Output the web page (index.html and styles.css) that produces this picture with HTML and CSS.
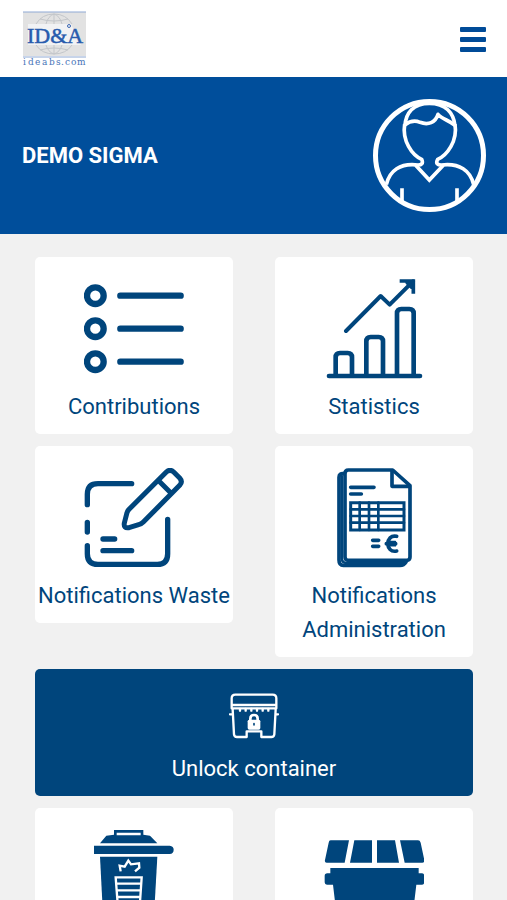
FILE: index.html
```html
<!DOCTYPE html>
<html lang="en">
<head>
<meta charset="utf-8">
<meta name="viewport" content="width=device-width, initial-scale=1">
<title>DEMO SIGMA</title>
<link rel="stylesheet" href="styles.css">
</head>
<body>
<header class="topbar">
  <a class="brand" href="#">
    <svg class="brand-logo" viewBox="0 0 63 56">
      <rect y="1" width="63" height="44" fill="#e2e2e2"/>
      <path d="M5 13H48L58 34H5Z" fill="#f1f2f4"/>
      <g fill="none" stroke="#c3c6ca" stroke-width="1">
        <path d="M13 13Q19 3 31 3Q43 3 49 13M23 13Q25 5 31 3Q37 5 39 13M17 8Q31 12 45 8M31 3V13"/>
        <path d="M13 34Q19 43 31 43Q43 43 49 34M23 34Q25 41 31 43Q37 41 39 34M17 39Q31 35 45 39M31 34V43"/>
      </g>
      <path d="M0 1H63M0 46H63" stroke="#8fa9d4" stroke-width="1"/>
      <text class="logo-name" x="4" y="32">ID&amp;A</text>
      <circle cx="46" cy="15" r="1.500" fill="none" stroke="#3c68b3"/>
      <text class="logo-site" x="0" y="54">i</text>
      <text class="logo-site" x="5" y="54">d</text>
      <text class="logo-site" x="12" y="54">e</text>
      <text class="logo-site" x="19" y="54">a</text>
      <text class="logo-site" x="26" y="54">b</text>
      <text class="logo-site" x="33" y="54">s</text>
      <text class="logo-site" x="38" y="54">.</text>
      <text class="logo-site" x="42" y="54">c</text>
      <text class="logo-site" x="48" y="54">o</text>
      <text class="logo-site" x="54" y="54">m</text>
    </svg>
  </a>
  <button class="menu-button" type="button" aria-label="Menu">
    <span class="menu-bar"></span><span class="menu-bar"></span><span class="menu-bar"></span>
  </button>
</header>

<section class="profile">
  <h1 class="profile-name">DEMO SIGMA</h1>
  <svg class="avatar" viewBox="39 296 339 339" fill="none" stroke="#fff" stroke-width="11" stroke-linejoin="round">
    <circle cx="208.500" cy="465.500" r="162" stroke-width="15"/>
    <path d="M135 376C137 338 160 309 208 309C257 309 281 338 285 376"/>
    <path d="M134 374C151 361 166 360 180 366C205 375 226 367 234 342C247 357 266 359 285 375"/>
    <path d="M134 372C126 421 156 464 185 477C191 490 184 494 174 494C121 487 88 511 79 553M285 372C293 421 262 464 233 477C226 490 233 494 244 494C298 487 332 511 341 553"/>
    <path d="M167 495L208 539L250 495M126 564V608M291 564V608" stroke-linejoin="miter"/>
  </svg>
</section>

<main class="tiles">
  <button class="tile" type="button">
    <svg class="tile-icon" viewBox="162 87 300 300" fill="none" stroke="currentColor" stroke-width="19" stroke-linecap="round">
      <circle cx="196" cy="137" r="25"/><circle cx="196" cy="236" r="25"/><circle cx="196" cy="335" r="25"/>
      <path d="M271 137H452M271 236H452M271 335H452"/>
    </svg>
    <span class="tile-label">Contributions</span>
  </button>

  <button class="tile" type="button">
    <svg class="tile-icon" viewBox="162 87 300 300" fill="none" stroke="currentColor" stroke-width="14" stroke-linecap="round" stroke-linejoin="round">
      <path d="M177 378H450M197 376V322Q197 309 210 309H233Q246 309 246 322V376M289 376V274Q289 261 302 261H326Q339 261 339 274V376M381 376V190Q381 177 394 177H418Q431 177 431 190V376"/>
      <path d="M228 243L332 138L359 164L429 94" stroke-width="12"/>
      <path d="M389 93H430V131" stroke-width="11" stroke-linecap="butt" stroke-linejoin="miter"/>
      <path d="M412 98L425 111" stroke-width="12"/>
    </svg>
    <span class="tile-label">Statistics</span>
  </button>

  <button class="tile" type="button">
    <svg class="tile-icon" viewBox="162 84 300 300" fill="none" stroke="currentColor" stroke-width="16" stroke-linecap="round" stroke-linejoin="round">
      <path d="M305 131H204Q172 131 172 163V194M172 247V276M172 317V341Q172 373 204 373H382Q413 373 413 341V238M219 297H254M219 332H305"/>
      <path d="M409 96Q420 86 431 96L449 114Q459 125 449 136L340 246Q334 252 326 254L297 263Q280 266 283 249L291 218Q293 212 298 207ZM386 122L422 158" stroke-width="15"/>
    </svg>
    <span class="tile-label">Notifications Waste</span>
  </button>

  <button class="tile" type="button">
    <svg class="tile-icon" viewBox="162 84 300 300" fill="none" stroke="currentColor" stroke-width="11" stroke-linecap="round" stroke-linejoin="round">
      <path d="M235 90H368L420 137V351Q420 361 410 361H235Q225 361 225 351V101Q225 90 235 90Z"/>
      <path d="M366 93V139H418"/>
      <path d="M222 101Q207 99 207 112V360Q207 376 220 376H390Q402 376 408 366"/>
      <path d="M215 108V354Q216 369 229 369H402" stroke-width="8"/>
      <path d="M242 142H312M242 162H274"/>
      <path d="M242 188H402V270H242Z" stroke-width="9" stroke-linejoin="miter"/>
      <path d="M242 208H402M242 228H402M242 248H402M269 188V270M297 188V270M325 188V270" stroke-width="8"/>
      <path d="M308 301H326M308 319H326" stroke-width="11"/>
      <path d="M380 289C345 281 345 341 380 333M349 311H377" stroke-width="11"/>
      <path d="M352 305H376V317H352Z" fill="currentColor" stroke-width="5"/>
    </svg>
    <span class="tile-label">Notifications Administration</span>
  </button>

  <button class="tile tile-wide" type="button">
    <svg class="tile-icon tile-icon-small" viewBox="237 90 150 150" fill="none" stroke="currentColor" stroke-width="7" stroke-linecap="round" stroke-linejoin="round">
      <path d="M245 142V112Q245 101 256 101H368Q379 101 379 112V142ZM246 132H378M248 145L252 220Q253 228 261 228H290V211H334V228H364Q372 228 373 220L377 145M240 160H248M377 160H384"/>
      <path d="M270 144V149M287 144V149M304 144V149M321 144V149M338 144V149M355 144V149"/>
      <path d="M301 183V173Q301 162 312 162Q323 162 323 173V183" stroke-width="8"/>
      <rect x="293" y="176" width="38" height="30" rx="5" fill="currentColor" stroke="none"/>
      <path d="M312 188V192" stroke="#00457c" stroke-width="5"/>
    </svg>
    <span class="tile-label">Unlock container</span>
  </button>

  <button class="tile" type="button" aria-label="Bin">
    <svg class="tile-icon" viewBox="162 90 300 300" fill="currentColor">
      <path d="M252 90H340V104L360 107L382 130H210L229 107L252 104ZM260 98V106H332V98Z" fill-rule="evenodd"/>
      <path d="M192 137H419Q431 138 431 149Q431 161 419 162H192Z"/>
      <path d="M210 170H382L370 384H221Z"/>
      <path d="M272 214L269 197L284 200L295 182L303 193L327 190L328 203L315 214M257 232H335L327 350H266ZM258 251H333M259 271H332M260 291H331M262 311H329M264 331H328" fill="none" stroke="#fff" stroke-width="7"/>
    </svg>
  </button>

  <button class="tile" type="button" aria-label="Container">
    <svg class="tile-icon" viewBox="162 90 300 300" fill="currentColor">
      <path d="M182 121H237L224 188H170Q163 188 165 180L176 128Q177 121 182 121ZM253 121H306V188H240ZM321 121H375L387 188H321ZM390 121H444Q450 121 452 128L463 180Q464 188 457 188H404Z"/>
      <path d="M181 204H446V220H455Q463 220 463 228V245Q463 254 455 254H439L424 380H204L189 254H172Q164 254 164 245V228Q164 220 172 220H181Z"/>
    </svg>
  </button>
</main>
</body>
</html>
```
FILE: styles.css
```css
* {
  box-sizing: border-box;
}

body {
  display: flex;
  flex-direction: column;
  height: 100vh;
  margin: 0;
  overflow: hidden;
  background: #f1f1f1;
  font-family: Roboto, sans-serif;
}

button {
  border: 0;
  font: inherit;
  cursor: pointer;
}

.topbar {
  display: flex;
  flex-shrink: 0;
  align-items: center;
  justify-content: space-between;
  padding: 11px 21px 10px 23px;
  background: #fff;
}

.brand-logo {
  display: block;
  width: 63px;
  height: 56px;
}

.logo-name {
  fill: #285bad;
  stroke: #285bad;
  stroke-width: 0.5px;
  font-family: "Liberation Serif", serif;
  font-size: 22px;
}

.logo-site {
  fill: #4774b8;
  font-family: "DejaVu Serif", serif;
  font-size: 9px;
}

.menu-button {
  display: flex;
  flex-direction: column;
  gap: 5px;
  padding: 0;
  background: none;
}

.menu-bar {
  width: 26px;
  height: 5px;
  border-radius: 1px;
  background: #004b98;
}

.profile {
  display: flex;
  flex-shrink: 0;
  align-items: center;
  justify-content: space-between;
  padding: 22px 21px 22px 22px;
  background: #004e9b;
}

.profile-name {
  margin: 0;
  color: #fff;
  font-size: 22px;
  font-weight: 700;
}

.avatar {
  width: 113px;
  height: 113px;
}

.tiles {
  display: grid;
  flex: 1;
  grid-template-columns: 1fr 1fr;
  grid-auto-rows: max-content;
  align-items: start;
  gap: 12px 42px;
  min-height: 0;
  padding: 23px 34px 0 35px;
  overflow: hidden;
}

.tile {
  display: flex;
  flex-direction: column;
  align-items: center;
  gap: 11px;
  padding: 22px 0 10px;
  border-radius: 5px;
  background: #fff;
  color: #00457c;
}

.tile-icon {
  width: 100px;
  height: 100px;
}

.tile-label {
  font-size: 22px;
  line-height: 34px;
}

.tile-wide {
  grid-column: 1 / -1;
  background: #00457c;
  color: #fff;
}

.tile-icon-small {
  width: 50px;
  height: 50px;
}
```
